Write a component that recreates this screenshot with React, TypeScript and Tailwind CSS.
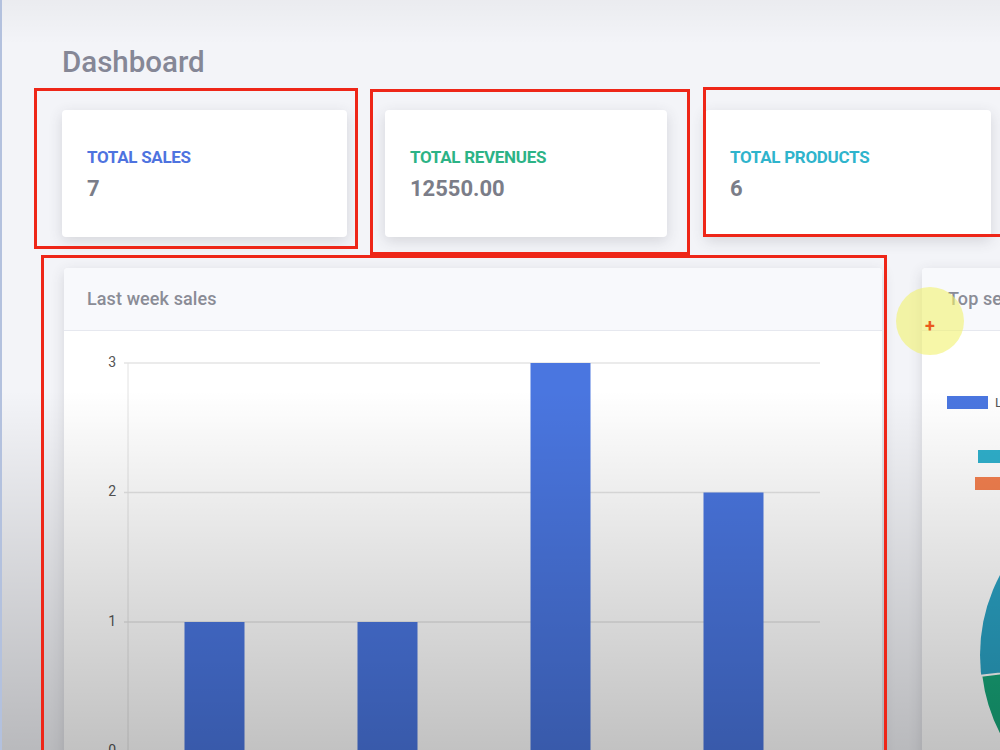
import React from "react";

const bars = [1, 1, 3, 2];

function BarChart() {
  const top = 32;
  const unit = 129.5;
  const x0 = 64;
  const x1 = 756;
  const slot = (x1 - x0) / 4;
  return (
    <svg width="818" height="430" className="block">
      {[3, 2, 1, 0].map((v) => {
        const y = top + (3 - v) * unit;
        return (
          <g key={v}>
            <line x1={x0 - 4} x2={x1} y1={y} y2={y} stroke="#e4e4e4" strokeWidth="1.5" />
            <text
              x={52}
              y={y}
              textAnchor="end"
              dominantBaseline="middle"
              fontSize="14"
              fill="#555"
              fontFamily="Roboto, sans-serif"
            >
              {v}
            </text>
          </g>
        );
      })}
      <line x1={x0} x2={x0} y1={top} y2={430} stroke="#e2e2e2" strokeWidth="1" />
      {bars.map((v, i) => {
        const cx = x0 + slot * i + slot / 2;
        const h = v * unit;
        return (
          <rect
            key={i}
            x={cx - 30}
            y={top + 3 * unit - h}
            width={60}
            height={h}
            fill="#4a76e0"
          />
        );
      })}
    </svg>
  );
}

function PieSide() {
  const cx = 228;
  const cy = 324;
  const r = 170;
  const pt = (deg: number) => {
    const a = (deg * Math.PI) / 180;
    return [cx + r * Math.cos(a), cy + r * Math.sin(a)];
  };
  const [ax, ay] = pt(105);
  const [bx, by] = pt(173);
  return (
    <svg width="300" height="430" className="block">
      <rect x="25" y="65" width="41" height="13" fill="#4a76e0" />
      <text x="73" y="76" fontSize="13" fill="#555" fontFamily="Roboto, sans-serif">
        Last week sales
      </text>
      <rect x="56" y="119" width="44" height="13" fill="#2fb0cc" />
      <rect x="53" y="146" width="47" height="13" fill="#f4804f" />
      <circle cx={cx} cy={cy} r={r} fill="#2aa2c4" />
      <path
        d={`M ${cx} ${cy} L ${ax} ${ay} A ${r} ${r} 0 0 1 ${bx} ${by} Z`}
        fill="#17a679"
        stroke="#ffffff"
        strokeWidth="2"
      />
    </svg>
  );
}

function StatCard({
  label,
  value,
  color,
  width,
}: {
  label: string;
  value: string;
  color: string;
  width: string;
}) {
  return (
    <div
      className={`${width} h-[127px] shrink-0 rounded-[4px] bg-white pl-[25px] pt-[37px] shadow-[0_4px_14px_rgba(58,59,69,0.16)]`}
    >
      <div className={`text-[17px] font-bold leading-[20px] tracking-[-0.3px] ${color}`}>{label}</div>
      <div className="mt-[9px] text-[22px] font-bold leading-[26px] text-[#7b7d88]">{value}</div>
    </div>
  );
}

export default function App() {
  return (
    <div
      className="relative h-[750px] w-[1000px] overflow-hidden border-l-[2px] border-[#b3c1de] bg-[#f3f4f8]"
      style={{ fontFamily: "Roboto, 'Noto Sans', sans-serif" }}
    >
      <div className="pl-[60px]">
        <h1 className="mt-[48px] text-[29.5px] font-medium leading-[29px] text-[#858796]">Dashboard</h1>

        <div className="mt-[33px] flex gap-[38px]">
          <StatCard label="TOTAL SALES" value="7" color="text-[#4e73df]" width="w-[285px]" />
          <StatCard label="TOTAL REVENUES" value="12550.00" color="text-[#2cb386]" width="w-[282px]" />
          <StatCard label="TOTAL PRODUCTS" value="6" color="text-[#2fb4cc]" width="w-[286px]" />
        </div>

        <div className="mt-[31px] flex gap-[40px] pl-[2px]">
          <div className="w-[818px] shrink-0 overflow-hidden rounded-[4px] bg-white shadow-[0_4px_14px_rgba(58,59,69,0.16)]">
            <div className="flex h-[63px] items-center border-b border-[#e6e8ef] bg-[#f8f9fc] pl-[23px] pb-[2px] text-[18px] font-medium tracking-[0.1px] text-[#8a8c96]">
              Last week sales
            </div>
            <BarChart />
          </div>
          <div className="w-[300px] shrink-0 overflow-hidden rounded-[4px] bg-white shadow-[0_4px_14px_rgba(58,59,69,0.16)]">
            <div className="flex h-[63px] items-center whitespace-nowrap border-b border-[#e6e8ef] bg-[#f8f9fc] pl-[26px] pb-[2px] text-[18px] font-medium tracking-[0.1px] text-[#8a8c96]">
              Top sellers
            </div>
            <PieSide />
          </div>
        </div>
      </div>

      {/* video vignette */}
      <div className="pointer-events-none absolute inset-0 bg-[linear-gradient(to_bottom,rgba(0,0,0,0.035)_0%,rgba(0,0,0,0)_6%,rgba(0,0,0,0)_52%,rgba(0,0,0,0.1)_72%,rgba(0,0,0,0.24)_100%)]" />

      {/* annotation boxes */}
      <div className="pointer-events-none absolute left-[32px] top-[88px] h-[161px] w-[324px] border-[3px] border-[#ee2618]" />
      <div className="pointer-events-none absolute left-[368px] top-[89px] h-[166px] w-[320px] border-[3px] border-[#ee2618]" />
      <div className="pointer-events-none absolute left-[701px] top-[87px] h-[150px] w-[320px] border-[3px] border-[#ee2618]" />
      <div className="pointer-events-none absolute left-[39px] top-[255px] h-[520px] w-[846px] border-[3px] border-[#ee2618]" />

      {/* cursor highlight */}
      <div className="pointer-events-none absolute left-[894px] top-[287px] h-[68px] w-[68px] rounded-full bg-[rgba(242,242,110,0.6)]" />
      <div className="pointer-events-none absolute left-[923px] top-[319px] text-[18px] font-bold leading-[14px] text-[#ea5a1c]">
        +
      </div>
    </div>
  );
}
